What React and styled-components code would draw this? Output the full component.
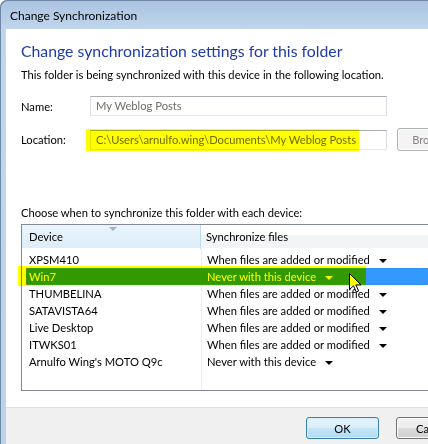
import React from 'react';
import styled, { createGlobalStyle } from 'styled-components';

const GlobalStyle = createGlobalStyle`
  html, body { margin: 0; padding: 0; overflow: hidden; background: #fff; }
  body { font-family: Lato, "Noto Sans", sans-serif; font-size: 11.2px; color: #000; }
`;

const Window = styled.div`
  position: relative;
  width: 480px;
  height: 444px;
  background: linear-gradient(#a9c2df 0px, #c1d6ed 29px, #bcd3eb 100%);
  border-top-left-radius: 7px;
  box-shadow: inset 1px 1px 0 #6f88a6;
  display: flex;
  flex-direction: column;
  overflow: hidden;
`;

const TitleBar = styled.div`
  height: 29px;
  flex: none;
  display: flex;
  align-items: center;
  padding-left: 10px;
  padding-top: 2px;
  box-sizing: border-box;
  font-size: 12px;
  color: #000;
`;

const Client = styled.div`
  flex: 1;
  margin-left: 6px;
  background: #fff;
  display: flex;
  flex-direction: column;
  min-height: 0;
`;

const Content = styled.div`
  padding: 11px 0 0 15px;
  display: flex;
  flex-direction: column;
`;

const Heading = styled.h1`
  margin: 0;
  font-size: 15.8px;
  font-weight: normal;
  line-height: 22px;
  color: #1f3ca6;
`;

const Text = styled.p`
  margin: ${(p) => p.$mt}px 0 0;
  line-height: 16px;
`;

const FieldRow = styled.div`
  display: flex;
  align-items: center;
  height: ${(p) => p.$h}px;
  margin-top: ${(p) => p.$mt}px;
`;

const Label = styled.label`
  width: 69px;
  flex: none;
`;

const Input = styled.div`
  box-sizing: border-box;
  width: 297px;
  height: 20px;
  border: 1px solid #abadb3;
  border-color: #abadb3 #dbdfe6 #e3e9ef #e2e3ea;
  padding-left: 5px;
  line-height: 18px;
  color: #6d6d6d;
  white-space: nowrap;
`;

const Button = styled.div`
  box-sizing: border-box;
  width: ${(p) => p.$w || 73}px;
  height: ${(p) => p.$h || 22}px;
  border-radius: 3px;
  display: flex;
  align-items: center;
  justify-content: center;
  flex: none;
  border: 1px solid ${(p) => (p.$default ? '#3c7fb1' : p.$disabled ? '#adb2b5' : '#707070')};
  color: ${(p) => (p.$disabled ? '#838383' : '#000')};
  box-shadow: inset 0 0 0 1px ${(p) => (p.$default ? '#d6eefb' : '#fcfcfc')};
  background: ${(p) =>
    p.$default
      ? 'linear-gradient(#e5f4fc 0%, #d9eefb 50%, #c4e5f6 50%, #b2dcf4 100%)'
      : p.$disabled
      ? '#f4f4f4'
      : 'linear-gradient(#f2f2f2 0%, #ebebeb 50%, #dddddd 50%, #cfcfcf 100%)'};
  margin-left: ${(p) => p.$ml || 0}px;
`;

const List = styled.div`
  margin-top: 3px;
  margin-right: 21px;
  height: 167px;
  box-sizing: border-box;
  border: 1px solid #828790;
  display: flex;
  flex-direction: column;
`;

const Header = styled.div`
  display: flex;
  height: 24px;
  flex: none;
`;

const HeadCell = styled.div`
  position: relative;
  box-sizing: border-box;
  width: ${(p) => (p.$w ? `${p.$w}px` : 'auto')};
  flex: ${(p) => (p.$w ? 'none' : '1')};
  display: flex;
  align-items: center;
  padding-left: ${(p) => p.$pl}px;
  border-right: 1px solid ${(p) => (p.$sorted ? '#c0dcf3' : '#e5e5e5')};
  background: ${(p) =>
    p.$sorted
      ? 'linear-gradient(#e9f5fd 0px, #e3f1fb 10px, #dcedf9 23px, #ffffff 23px)'
      : 'linear-gradient(#ffffff 0px, #ffffff 10px, #f3f4f6 10px, #f3f4f6 23px, #ffffff 23px)'};
  padding-bottom: 1px;
`;

const SortArrow = styled.svg`
  position: absolute;
  top: 2px;
  left: 87px;
`;

const Rows = styled.div`
  flex: 1;
  padding: 2px 0 0 4px;
  background: linear-gradient(
    to right,
    transparent 179px,
    #ececec 179px,
    #ececec 180px,
    transparent 180px
  );
`;

const Row = styled.div`
  display: flex;
  height: 17px;
  box-sizing: border-box;
  align-items: center;
  color: ${(p) => (p.$selected ? '#fff' : '#000')};
  background: ${(p) => (p.$selected ? '#3399ff' : 'transparent')};
  border-top: 1px dotted ${(p) => (p.$selected ? '#cc6600' : 'transparent')};
  border-bottom: 1px dotted ${(p) => (p.$selected ? '#cc6600' : 'transparent')};
  white-space: nowrap;
`;

const DeviceCell = styled.div`
  width: 175px;
  flex: none;
  padding-left: 3px;
  box-sizing: border-box;
`;

const SyncCell = styled.div`
  display: flex;
  align-items: center;
  padding-left: 6px;
`;

const DropArrow = styled.svg`
  margin-left: 9px;
  margin-top: 2px;
  flex: none;
`;

const Footer = styled.div`
  margin-top: 16px;
  flex: 1;
  background: #f0f0f0;
  border-top: 1px solid #dfdfdf;
  display: flex;
  justify-content: flex-end;
  align-items: flex-start;
  padding: 9px 11px 0 0;
`;

const Highlight = styled.div`
  position: absolute;
  left: ${(p) => p.$x}px;
  top: ${(p) => p.$y}px;
  width: ${(p) => p.$w}px;
  height: ${(p) => p.$h}px;
  background: #ffff00;
  mix-blend-mode: multiply;
  pointer-events: none;
`;

const Cursor = styled.svg`
  position: absolute;
  left: 349px;
  top: 273px;
`;

const devices = [
  ['XPSM410', 'When files are added or modified'],
  ['Win7', 'Never with this device', true],
  ['THUMBELINA', 'When files are added or modified'],
  ['SATAVISTA64', 'When files are added or modified'],
  ['Live Desktop', 'When files are added or modified'],
  ['ITWKS01', 'When files are added or modified'],
  ["Arnulfo Wing's MOTO Q9c", 'Never with this device'],
];

export default function App() {
  return (
    <>
      <GlobalStyle />
      <Window>
        <TitleBar>Change Synchronization</TitleBar>
        <Client>
          <Content>
            <Heading>Change synchronization settings for this folder</Heading>
            <Text $mt={5}>
              This folder is being synchronized with this device in the following location.
            </Text>
            <FieldRow $h={20} $mt={13}>
              <Label>Name:</Label>
              <Input>My Weblog Posts</Input>
            </FieldRow>
            <FieldRow $h={23} $mt={12}>
              <Label>Location:</Label>
              <Input>C:\Users\arnulfo.wing\Documents\My Weblog Posts</Input>
              <Button $disabled $w={75} $h={23} $ml={10}>
                Browse...
              </Button>
            </FieldRow>
            <Text $mt={54}>Choose when to synchronize this folder with each device:</Text>
            <List>
              <Header>
                <HeadCell $w={179} $pl={7} $sorted>
                  Device
                  <SortArrow width="8" height="4" viewBox="0 0 8 4">
                    <polygon points="0,0 8,0 4,4" fill="#9cb3cd" />
                  </SortArrow>
                </HeadCell>
                <HeadCell $pl={5}>Synchronize files</HeadCell>
              </Header>
              <Rows>
                {devices.map(([name, mode, sel]) => (
                  <Row key={name} $selected={sel}>
                    <DeviceCell>{name}</DeviceCell>
                    <SyncCell>
                      {mode}
                      <DropArrow width="8" height="4" viewBox="0 0 8 4">
                        <polygon points="0,0 8,0 4,4" fill={sel ? '#fff' : '#000'} />
                      </DropArrow>
                    </SyncCell>
                  </Row>
                ))}
              </Rows>
            </List>
          </Content>
          <Footer>
            <Button $default>OK</Button>
            <Button $ml={17}>Cancel</Button>
          </Footer>
        </Client>
        <Cursor width="13" height="20" viewBox="0 0 13 20">
          <path
            d="M0.5 0.5 L0.5 16.5 L4.5 12.8 L7.3 19 L9.6 18 L6.9 11.9 L12 11.9 Z"
            fill="#fff"
            stroke="#000"
            strokeWidth="1"
            strokeLinejoin="miter"
          />
        </Cursor>
        <Highlight $x={86} $y={129} $w={273} $h={22} />
        <Highlight $x={18} $y={266} $w={348} $h={20} />
      </Window>
    </>
  );
}
